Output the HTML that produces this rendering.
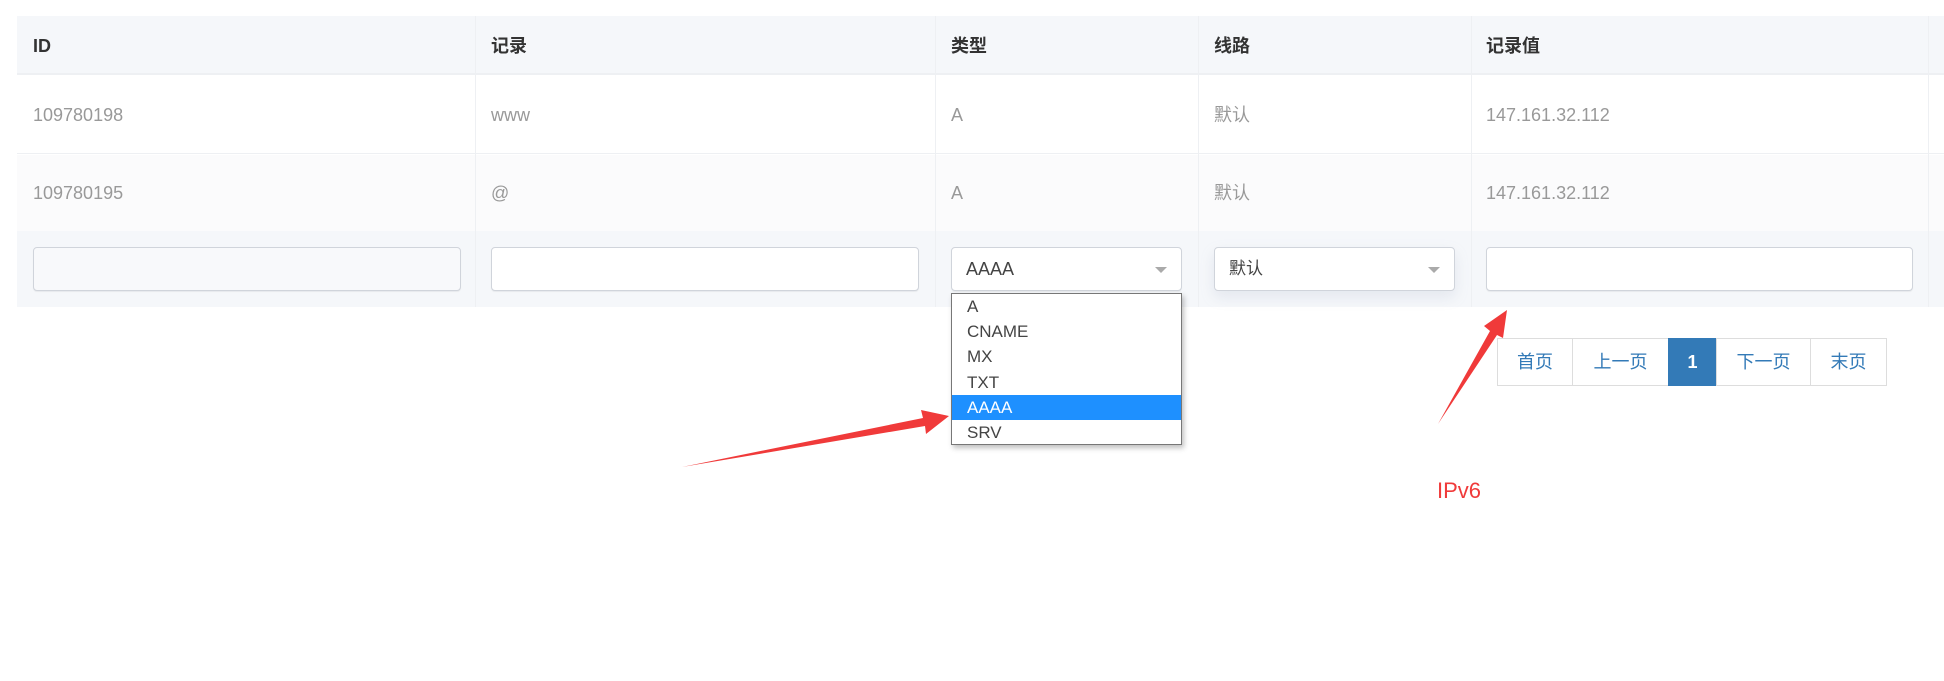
<!DOCTYPE html>
<html><head><meta charset="utf-8"><style>
*{box-sizing:border-box;margin:0;padding:0}
body{width:1944px;height:681px;background:#fff;font-family:"Liberation Sans","Noto Sans CJK SC",sans-serif;position:relative;overflow:hidden}
.abs{position:absolute}
.hdr{left:17px;top:16px;width:1927px;height:59px;background:#f5f7fa;border-bottom:2px solid #eef0f3}
.r1{left:17px;top:75px;width:1927px;height:79px;background:#fff;border-bottom:1px solid #eef0f3}
.r2{left:17px;top:155px;width:1927px;height:76px;background:#fbfbfc}
.r3{left:17px;top:231px;width:1927px;height:76px;background:#f5f7fa}
.vl{top:16px;width:1px;height:291px;background:#eef0f3}
.th{font-size:18px;font-weight:bold;color:#333;top:34px;line-height:24px;height:24px}
.td{font-size:18px;color:#999;line-height:24px;height:24px}
.inp{background:#fff;border:1px solid #d0d4db;border-radius:4px;height:44px;top:247px;box-shadow:0 1px 1px rgba(0,0,0,.06);line-height:42px}
.car{position:absolute;right:14px;top:19px;width:0;height:0;border-left:6px solid transparent;border-right:6px solid transparent;border-top:6px solid #aaa}
.dd{left:951px;top:293px;width:231px;height:152px;background:#fff;border:1px solid #777;box-shadow:2px 3px 5px rgba(0,0,0,.25);font-size:17px;color:#444}
.dd div{height:25.2px;line-height:25px;padding-left:15px}
.dd .sel{background:#1e90ff;color:#fff}
.pg{top:338px;height:48px;border:1px solid #ddd;font-size:18px;color:#337ab7;text-align:center;line-height:46px;background:#fff}
</style></head><body>
<div class="abs hdr"></div>
<div class="abs r1"></div>
<div class="abs r2"></div>
<div class="abs r3"></div>
<div class="abs vl" style="left:475px"></div>
<div class="abs vl" style="left:935px"></div>
<div class="abs vl" style="left:1198px"></div>
<div class="abs vl" style="left:1471px"></div>
<div class="abs vl" style="left:1928px"></div>

<div class="abs th" style="left:33px">ID</div>
<div class="abs th" style="left:491px">记录</div>
<div class="abs th" style="left:951px">类型</div>
<div class="abs th" style="left:1214px">线路</div>
<div class="abs th" style="left:1486px">记录值</div>

<div class="abs td" style="left:33px;top:103px">109780198</div>
<div class="abs td" style="left:491px;top:103px">www</div>
<div class="abs td" style="left:951px;top:103px">A</div>
<div class="abs td" style="left:1214px;top:103px">默认</div>
<div class="abs td" style="left:1486px;top:103px">147.161.32.112</div>
<div class="abs td" style="left:33px;top:181px">109780195</div>
<div class="abs td" style="left:491px;top:181px">@</div>
<div class="abs td" style="left:951px;top:181px">A</div>
<div class="abs td" style="left:1214px;top:181px">默认</div>
<div class="abs td" style="left:1486px;top:181px">147.161.32.112</div>

<div class="abs inp" style="left:33px;width:428px;background:#f8f9fb"></div>
<div class="abs inp" style="left:491px;width:428px"></div>
<div class="abs inp" style="left:951px;width:231px;font-size:18px;color:#444;padding-left:14px">AAAA<span class="car"></span></div>
<div class="abs inp" style="left:1214px;width:241px;font-size:17px;color:#444;padding-left:14px;box-shadow:0 6px 14px rgba(150,160,190,.18)">默认<span class="car"></span></div>
<div class="abs inp" style="left:1486px;width:427px"></div>

<div class="abs dd">
<div>A</div><div>CNAME</div><div>MX</div><div>TXT</div><div class="sel">AAAA</div><div>SRV</div>
</div>

<div class="abs pg" style="left:1497px;width:76px">首页</div>
<div class="abs pg" style="left:1572px;width:97px">上一页</div>
<div class="abs pg" style="left:1668px;width:49px;background:#337ab7;border-color:#337ab7;color:#fff;font-weight:bold">1</div>
<div class="abs pg" style="left:1716px;width:95px">下一页</div>
<div class="abs pg" style="left:1810px;width:77px">末页</div>

<svg class="abs" style="left:0;top:0" width="1944" height="681">
<polygon fill="#f03a3a" points="682,467 923,418 921,410 949,416 926,434 925,426"/>
<polygon fill="#f03a3a" points="1438,424 1490,331 1484,326 1507,310 1503,338 1497,335"/>
</svg>
<div class="abs" style="left:1437px;top:478px;font-size:22px;color:#f03a3a">IPv6</div>
</body></html>
